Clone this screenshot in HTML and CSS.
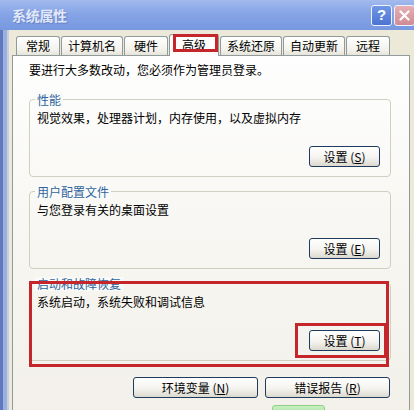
FILE: index.html
```html
<!DOCTYPE html>
<html lang="zh-CN">
<head>
    <meta charset="UTF-8">
    <meta name="viewport" content="width=device-width, initial-scale=1.0">
    <title>系统属性</title>
    <link rel="stylesheet" href="styles.css">
</head>
<body>
    <div class="window">
        <!-- Title bar -->
        <div class="titlebar">
            <div class="title">系统属性</div>
            <div class="caption-buttons">
                <div class="cap-btn help">?</div>
                <div class="cap-btn close">
                    <svg width="11" height="11" viewBox="0 0 11 11">
                        <path d="M1.5 1.5 L9.5 9.5 M9.5 1.5 L1.5 9.5" stroke="#fff" stroke-width="2.2" stroke-linecap="round"/>
                    </svg>
                </div>
            </div>
        </div>

        <div class="frame">
            <div class="frame-edge"></div>

            <div class="dialog">
                <!-- Tabs -->
                <div class="tabs">
                    <div class="tab">常规</div>
                    <div class="tab">计算机名</div>
                    <div class="tab">硬件</div>
                    <div class="tab active marked">高级</div>
                    <div class="tab">系统还原</div>
                    <div class="tab">自动更新</div>
                    <div class="tab">远程</div>
                </div>

                <!-- Advanced tab page -->
                <div class="panel">
                    <div class="intro">要进行大多数改动，您必须作为管理员登录。</div>

                    <div class="group">
                        <div class="group-title">性能</div>
                        <div class="group-desc">视觉效果，处理器计划，内存使用，以及虚拟内存</div>
                        <div class="group-actions">
                            <button class="btn">设置 (<u>S</u>)</button>
                        </div>
                    </div>

                    <div class="group">
                        <div class="group-title">用户配置文件</div>
                        <div class="group-desc">与您登录有关的桌面设置</div>
                        <div class="group-actions">
                            <button class="btn">设置 (<u>E</u>)</button>
                        </div>
                    </div>

                    <div class="group marked">
                        <div class="group-title">启动和故障恢复</div>
                        <div class="group-desc">系统启动，系统失败和调试信息</div>
                        <div class="group-actions">
                            <button class="btn marked">设置 (<u>T</u>)</button>
                        </div>
                    </div>

                    <div class="page-actions">
                        <button class="btn wide">环境变量 (<u>N</u>)</button>
                        <button class="btn wide">错误报告 (<u>R</u>)</button>
                    </div>

                    <div class="ok-row">
                        <div class="ok-hint"></div>
                    </div>
                </div>
            </div>
        </div>
    </div>
</body>
</html>
```

FILE: styles.css
```css
* {
    margin: 0;
    padding: 0;
    box-sizing: border-box;
}

:root {
    --dialog-bg: #ece9d8;
    --tab-border: #919b9c;
    --group-border: #d0d0bf;
    --group-title: #2f649e;
    --button-border: #1f3b5e;
    --mark-red: #c4262b;
    --text: #000000;
}

body {
    width: 414px;
    height: 410px;
    overflow: hidden;
    background-color: var(--dialog-bg);
    color: var(--text);
    font-family: "Noto Sans CJK SC", "Liberation Sans", sans-serif;
    font-size: 12px;
    line-height: 14px;
}

.window {
    display: flex;
    flex-direction: column;
    height: 410px;
}

/* Title bar */
.titlebar {
    height: 30px;
    flex-shrink: 0;
    display: flex;
    align-items: center;
    justify-content: space-between;
    padding-left: 12px;
    background: linear-gradient(#a3baee, #86a4e6 45%, #7798e0);
}

.title {
    color: #e2e9fa;
    font-size: 14px;
    font-weight: bold;
    letter-spacing: -0.3px;
    text-shadow: 1px 1px 1px #6680c4;
}

.caption-buttons {
    display: flex;
    gap: 2px;
    margin-right: -1px;
}

.cap-btn {
    width: 21px;
    height: 21px;
    border: 1px solid #eef2fc;
    border-radius: 3px;
    display: flex;
    align-items: center;
    justify-content: center;
    color: #fff;
    font-family: "Liberation Sans", sans-serif;
    font-weight: bold;
    font-size: 15px;
}

.help {
    background: linear-gradient(#7197e6, #4c73d2);
}

.close {
    background: linear-gradient(#e6b0b6, #d08b94);
}

/* Window frame */
.frame {
    flex: 1;
    display: flex;
    min-height: 0;
}

.frame-edge {
    width: 9px;
    flex-shrink: 0;
    background: linear-gradient(90deg, #6079bd 0 3px, #9cb0e0 3px 7px, #c9cfe0 7px);
}

.dialog {
    flex: 1;
    display: flex;
    flex-direction: column;
    padding: 4px 4px 0 3px;
    min-width: 0;
}

/* Tabs */
.tabs {
    display: flex;
    align-items: flex-end;
    gap: 1px;
    padding-left: 4px;
}

.tab {
    height: 19px;
    min-width: 44px;
    padding: 0 6px;
    display: flex;
    align-items: center;
    justify-content: center;
    border: 1px solid var(--tab-border);
    border-bottom: none;
    border-radius: 3px 3px 0 0;
    background: linear-gradient(#ffffff, #f3f2ec 70%, #e6e4da);
    white-space: nowrap;
}

.tab.active {
    height: 22px;
    min-width: 50px;
    margin-bottom: -1px;
    position: relative;
    z-index: 1;
    background: #fdfdfc;
    padding-bottom: 2px;
}

/* Tab page */
.panel {
    flex: 1;
    border: 1px solid var(--tab-border);
    border-bottom: none;
    padding: 7px 18px 0 16px;
    background: linear-gradient(#fefefe, #f6f5f0 60%, #f2f0e9);
}

.intro {
    margin-bottom: 22px;
}

/* Group boxes */
.group {
    border: 1px solid var(--group-border);
    border-radius: 4px;
    padding: 0 10px 9px 7px;
    margin-bottom: 14px;
}

.group-title {
    width: fit-content;
    margin: -7px 0 0 -2px;
    padding: 0 2px;
    color: var(--group-title);
    background-color: #fafaf8;
}

.group-desc {
    margin-top: 4px;
}

.group-actions {
    display: flex;
    justify-content: flex-end;
    margin-top: 21px;
}

/* Buttons */
.btn {
    width: 71px;
    height: 21px;
    border: 1px solid var(--button-border);
    border-radius: 3px;
    background: linear-gradient(#ffffff, #f4f3ef 55%, #dcd9ce);
    color: var(--text);
    font-family: inherit;
    font-size: 12px;
    line-height: 14px;
    display: flex;
    align-items: center;
    justify-content: center;
}

.btn.wide {
    width: 125px;
}

.page-actions {
    display: flex;
    justify-content: flex-end;
    gap: 7px;
    margin: 16px 1px 0 0;
}

.ok-row {
    display: flex;
    margin-top: 7px;
    padding-left: 243px;
}

.ok-hint {
    width: 53px;
    height: 12px;
    border: 1px solid #8fd087;
    border-radius: 3px;
    background: linear-gradient(#c6efbf, #a9e0a0);
}

/* Red annotation boxes */
.marked {
    position: relative;
}

.marked::after {
    content: '';
    position: absolute;
    border: 3px solid var(--mark-red);
    pointer-events: none;
}

.tab.marked::after {
    top: -1px;
    left: 3px;
    right: 0;
    bottom: 4px;
}

.group.marked::after {
    top: -3px;
    left: -1px;
    right: 1px;
    bottom: -7px;
}

.btn.marked::after {
    top: -8px;
    left: -15px;
    right: -8px;
    bottom: -8px;
}
```
